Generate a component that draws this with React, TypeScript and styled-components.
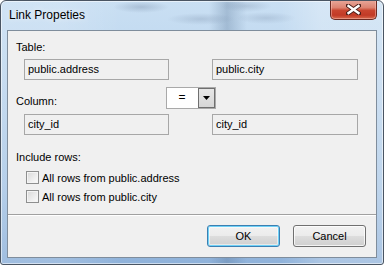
import styled, { createGlobalStyle } from "styled-components";

const GlobalStyle = createGlobalStyle`
  html, body {
    margin: 0;
    padding: 0;
    background: #ffffff;
  }
  * {
    box-sizing: border-box;
  }
`;

const LABEL_FONT = `"Liberation Sans", Arial, sans-serif`;

const Window = styled.div`
  width: 384px;
  height: 265px;
  border: 1px solid #4a5563;
  border-radius: 6px 6px 3px 3px;
  display: flex;
  flex-direction: column;
  overflow: hidden;
  box-shadow: inset 0 0 0 1px rgba(255, 255, 255, 0.55);
  background:
    radial-gradient(ellipse 28px 6px at 140px 6px, rgba(90, 110, 140, 0.28), transparent),
    radial-gradient(ellipse 34px 6px at 200px 18px, rgba(90, 110, 140, 0.22), transparent),
    radial-gradient(ellipse 30px 6px at 265px 17px, rgba(90, 110, 140, 0.2), transparent),
    radial-gradient(ellipse 26px 6px at 245px 5px, rgba(90, 110, 140, 0.22), transparent),
    linear-gradient(90deg, transparent 0 208px, rgba(70, 100, 135, 0.28) 226px, transparent 246px),
    linear-gradient(90deg, rgba(255, 255, 255, 0.15) 0 60px, transparent 120px, transparent 280px, rgba(255, 255, 255, 0.25) 320px),
    linear-gradient(180deg, #c9dff3 0%, #bdd6ee 30%, #a9c7e6 70%, #8fb2da 100%);
`;

const TitleBar = styled.div`
  height: 29px;
  display: flex;
  align-items: flex-start;
  justify-content: space-between;
  padding-left: 8px;
  padding-right: 6px;
`;

const Title = styled.div`
  font-family: ${LABEL_FONT};
  font-size: 12px;
  line-height: 14px;
  margin-top: 7px;
  color: #000000;
  text-shadow: 0 0 6px rgba(255, 255, 255, 0.9);
`;

const CloseButton = styled.div`
  width: 47px;
  height: 20px;
  margin-top: -1px;
  border: 1px solid #6b2a22;
  border-top: none;
  border-radius: 0 0 5px 5px;
  display: flex;
  align-items: center;
  justify-content: center;
  background: linear-gradient(180deg, #e9a99c 0%, #dd8371 40%, #c9452f 55%, #c23a26 80%, #d66a4e 100%);
  box-shadow: inset 0 0 0 1px rgba(255, 200, 190, 0.45);
`;

const Client = styled.div`
  flex: 1;
  margin: 0 6px 6px 6px;
  border: 1px solid #7f8d9c;
  background: #f0f0f0;
  display: flex;
  flex-direction: column;
`;

const Body = styled.div`
  flex: 1;
  padding: 8px 0 0 8px;
  display: flex;
  flex-direction: column;
  font-family: ${LABEL_FONT};
  font-size: 11px;
  color: #000000;
`;

const Label = styled.div<{ $top?: number }>`
  line-height: 16px;
  margin-top: ${(p) => p.$top ?? 0}px;
`;

const FieldGrid = styled.div<{ $top: number }>`
  display: grid;
  grid-template-columns: 145px 43px 146px;
  align-items: end;
  padding-left: 8px;
  margin-top: ${(p) => p.$top}px;
`;

const GridLabel = styled.div`
  line-height: 16px;
  margin-left: -8px;
`;

const ReadOnlyField = styled.div<{ $col: number }>`
  grid-column: ${(p) => p.$col};
  height: 21px;
  border: 1px solid #a7a7a7;
  background: #f0f0f0;
  padding: 0 3px;
  line-height: 19px;
  font-size: 11px;
  white-space: nowrap;
`;

const Select = styled.div`
  grid-column: 2;
  justify-self: center;
  width: 50px;
  height: 22px;
  border: 1px solid #a9a9a9;
  background: #ffffff;
  display: flex;
  align-items: stretch;
`;

const SelectValue = styled.div`
  flex: 1;
  text-align: center;
  line-height: 19px;
  font-size: 12px;
`;

const SelectArrow = styled.div`
  width: 17px;
  border: 1px solid #6f6f6f;
  background: linear-gradient(180deg, #e6e6e6 0%, #d6d6d6 100%);
  display: flex;
  align-items: center;
  justify-content: center;
`;

const CheckRow = styled.label<{ $top?: number }>`
  display: flex;
  align-items: center;
  gap: 3px;
  height: 19px;
  padding-left: 10px;
  margin-top: ${(p) => p.$top ?? 0}px;
`;

const CheckBox = styled.span`
  width: 13px;
  height: 13px;
  border: 1px solid #8e8f8f;
  background: linear-gradient(135deg, #d8d8d8 0%, #eeeeee 60%, #fbfbfb 100%);
  box-shadow: inset 0 0 0 1px #f4f4f4;
`;

const Footer = styled.div`
  border-top: 1px solid #a0a0a0;
  box-shadow: inset 0 1px 0 #ffffff;
  display: flex;
  justify-content: flex-end;
  gap: 13px;
  padding: 10px 10px 10px 0;
`;

const DialogButton = styled.button<{ $default?: boolean }>`
  width: 73px;
  height: 22px;
  padding: 0;
  font-family: ${LABEL_FONT};
  font-size: 11px;
  color: #000000;
  border-radius: 3px;
  border: 1px solid ${(p) => (p.$default ? "#3c7fb1" : "#707070")};
  background: linear-gradient(180deg, #f2f2f2 0%, #ebebeb 50%, #dddddd 51%, #cfcfcf 100%);
  box-shadow: ${(p) =>
    p.$default
      ? "inset 0 0 0 1px #6fd1f7, inset 0 0 0 2px rgba(255,255,255,0.5)"
      : "inset 0 0 0 1px rgba(255,255,255,0.75)"};
`;

function CloseGlyph() {
  return (
    <svg width="15" height="11" viewBox="0 0 15 11">
      <path d="M2 1.5 L13 9.5 M13 1.5 L2 9.5" stroke="#4a1f1a" strokeWidth="4.2" strokeLinecap="square" />
      <path d="M2.5 2 L12.5 9 M12.5 2 L2.5 9" stroke="#ffffff" strokeWidth="2.4" strokeLinecap="square" />
    </svg>
  );
}

function ArrowGlyph() {
  return (
    <svg width="7" height="4" viewBox="0 0 7 4">
      <path d="M0 0 H7 L3.5 4 Z" fill="#000000" />
    </svg>
  );
}

export default function App() {
  return (
    <>
      <GlobalStyle />
      <Window>
        <TitleBar>
          <Title>Link Propeties</Title>
          <CloseButton>
            <CloseGlyph />
          </CloseButton>
        </TitleBar>
        <Client>
          <Body>
            <Label>Table:</Label>
            <FieldGrid $top={4}>
              <ReadOnlyField $col={1}>public.address</ReadOnlyField>
              <ReadOnlyField $col={3}>public.city</ReadOnlyField>
            </FieldGrid>
            <FieldGrid $top={7}>
              <GridLabel>Column:</GridLabel>
              <Select>
                <SelectValue>=</SelectValue>
                <SelectArrow>
                  <ArrowGlyph />
                </SelectArrow>
              </Select>
            </FieldGrid>
            <FieldGrid $top={5}>
              <ReadOnlyField $col={1}>city_id</ReadOnlyField>
              <ReadOnlyField $col={3}>city_id</ReadOnlyField>
            </FieldGrid>
            <Label $top={14}>Include rows:</Label>
            <CheckRow $top={3}>
              <CheckBox />
              All rows from public.address
            </CheckRow>
            <CheckRow>
              <CheckBox />
              All rows from public.city
            </CheckRow>
          </Body>
          <Footer>
            <DialogButton $default>OK</DialogButton>
            <DialogButton>Cancel</DialogButton>
          </Footer>
        </Client>
      </Window>
    </>
  );
}
